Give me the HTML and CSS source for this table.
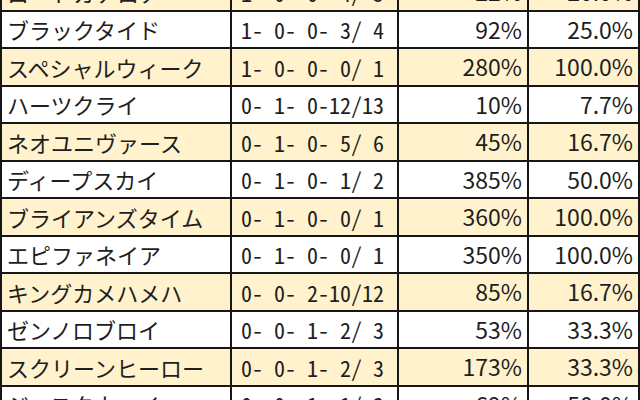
FILE: index.html
```html
<!DOCTYPE html>
<html lang="ja">
<head>
<meta charset="utf-8">
<link rel="stylesheet" href="styles.css">
</head>
<body>
<div class="viewport">
<table class="stats">
  <colgroup>
    <col class="c-name"><col class="c-rec"><col class="c-pct"><col class="c-rate">
  </colgroup>
  <tbody>
    <tr class="alt"><td>ロードカナロア</td><td class="rec">1- 0- 0- 4/ 5</td><td class="num">22%</td><td class="num">20.0%</td></tr>
    <tr><td>ブラックタイド</td><td class="rec">1- 0- 0- 3/ 4</td><td class="num">92%</td><td class="num">25.0%</td></tr>
    <tr class="alt"><td>スペシャルウィーク</td><td class="rec">1- 0- 0- 0/ 1</td><td class="num">280%</td><td class="num">100.0%</td></tr>
    <tr><td>ハーツクライ</td><td class="rec">0- 1- 0-12/13</td><td class="num">10%</td><td class="num">7.7%</td></tr>
    <tr class="alt"><td>ネオユニヴァース</td><td class="rec">0- 1- 0- 5/ 6</td><td class="num">45%</td><td class="num">16.7%</td></tr>
    <tr><td>ディープスカイ</td><td class="rec">0- 1- 0- 1/ 2</td><td class="num">385%</td><td class="num">50.0%</td></tr>
    <tr class="alt"><td>ブライアンズタイム</td><td class="rec">0- 1- 0- 0/ 1</td><td class="num">360%</td><td class="num">100.0%</td></tr>
    <tr><td>エピファネイア</td><td class="rec">0- 1- 0- 0/ 1</td><td class="num">350%</td><td class="num">100.0%</td></tr>
    <tr class="alt"><td>キングカメハメハ</td><td class="rec">0- 0- 2-10/12</td><td class="num">85%</td><td class="num">16.7%</td></tr>
    <tr><td>ゼンノロブロイ</td><td class="rec">0- 0- 1- 2/ 3</td><td class="num">53%</td><td class="num">33.3%</td></tr>
    <tr class="alt"><td>スクリーンヒーロー</td><td class="rec">0- 0- 1- 2/ 3</td><td class="num">173%</td><td class="num">33.3%</td></tr>
    <tr><td>ジャスタウェイ</td><td class="rec">0- 0- 1- 1/ 2</td><td class="num">69%</td><td class="num">50.0%</td></tr>
  </tbody>
</table>
</div>
</body>
</html>
```
FILE: styles.css
```css
html, body {
  margin: 0;
  padding: 0;
  background: #ffffff;
}
.viewport {
  width: 640px;
  height: 400px;
  overflow: hidden;
}
.stats {
  margin-top: -28px;
  width: 638px;
  border-collapse: collapse;
  table-layout: fixed;
  font-family: "Noto Sans CJK JP", "Noto Sans", sans-serif;
  font-size: 22px;
  color: #1e1e1e;
}
.c-name { width: 230px; }
.c-rec { width: 167px; }
.c-pct { width: 130px; }
.c-rate { width: 111px; }
.stats td {
  border: 2px solid #161616;
  height: 35.5px;
  padding: 0 5px;
  line-height: 1;
  white-space: pre;
  overflow: hidden;
  vertical-align: middle;
}
.stats tr.alt td {
  background: #fff2cc;
}
.stats td.rec {
  padding-left: 9px;
  font-feature-settings: "hwid";
}
.stats td.num {
  text-align: right;
  padding-right: 5px;
  font-size: 23px;
}
```
